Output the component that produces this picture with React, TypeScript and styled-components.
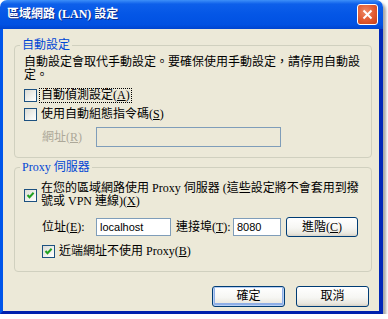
import React from "react";
import styled, { createGlobalStyle } from "styled-components";

const GlobalStyle = createGlobalStyle`
  body {
    margin: 0;
    background: #fff;
  }
`;

const Window = styled.div`
  width: 383px;
  height: 314px;
  display: flex;
  flex-direction: column;
  border-radius: 7px 7px 0 0;
  box-shadow: 3px 3px 3px rgba(0, 0, 0, 0.35);
  font-family: "Liberation Serif", "Noto Sans CJK TC", serif;
  font-size: 12px;
  line-height: 13px;
  color: #000;
`;

const TitleBar = styled.div`
  height: 29px;
  flex-shrink: 0;
  display: flex;
  align-items: center;
  padding: 0 5px 0 7px;
  border-radius: 7px 7px 0 0;
  background: linear-gradient(
    to bottom,
    #3d8ff8 0%,
    #0d5fea 14%,
    #0456e6 50%,
    #0151e2 85%,
    #0044cf 100%
  );
`;

const TitleText = styled.div`
  color: #fff;
  font-weight: bold;
  font-size: 12px;
  text-shadow: 1px 1px 0 #0a2a8a;
`;

const CloseButton = styled.div`
  margin-left: auto;
  width: 19px;
  height: 19px;
  border: 1px solid #fff;
  border-radius: 3px;
  display: flex;
  align-items: center;
  justify-content: center;
  background: radial-gradient(circle at 40% 35%, #ef8a66 0%, #e0582f 55%, #c33e16 100%);
`;

const Client = styled.div`
  flex: 1;
  display: flex;
  flex-direction: column;
  background: #ece9d8;
  border-left: 3px solid #0055ea;
  border-right: 4px solid #0026b8;
  border-bottom: 3px solid #0021ad;
  padding: 10px 7px 0 11px;
`;

const Group = styled.fieldset<{ $gap?: number }>`
  margin: ${(p) => p.$gap ?? 0}px 0 0;
  padding: 0;
  min-width: 0;
  border: 1px solid #d0d0bf;
  border-radius: 4px;
`;

const Legend = styled.legend`
  margin-left: 5px;
  padding: 0 2px;
  color: #0046d5;
  line-height: 13px;
`;

const GroupBody = styled.div<{ $top: number; $bottom: number }>`
  display: flex;
  flex-direction: column;
  padding: ${(p) => p.$top}px 9px ${(p) => p.$bottom}px 9px;
`;

const Desc = styled.p`
  margin: 0;
`;

const CheckRow = styled.div<{ $top: number; $indent?: number }>`
  display: flex;
  align-items: center;
  gap: 3px;
  margin-top: ${(p) => p.$top}px;
  padding-left: ${(p) => p.$indent ?? 0}px;
  min-height: 15px;
`;

const Box = styled.span`
  width: 11px;
  height: 11px;
  flex-shrink: 0;
  border: 1px solid #1c5180;
  background: linear-gradient(135deg, #dcdcd5 0%, #f2f2ee 60%, #ffffff 100%);
  display: flex;
  align-items: center;
  justify-content: center;
`;

const CheckLabel = styled.span<{ $focused?: boolean }>`
  padding: 0 1px;
  border: 1px dotted ${(p) => (p.$focused ? "#000" : "transparent")};
  margin-left: -1px;
`;

const FieldRow = styled.div<{ $top: number }>`
  display: flex;
  align-items: center;
  margin-top: ${(p) => p.$top}px;
  padding-left: 18px;
`;

const FieldLabel = styled.span<{ $width: number; $disabled?: boolean }>`
  width: ${(p) => p.$width}px;
  flex-shrink: 0;
  color: ${(p) => (p.$disabled ? "#aca899" : "#000")};
`;

const TextBox = styled.div<{ $width: number; $height: number; $disabled?: boolean }>`
  width: ${(p) => p.$width}px;
  height: ${(p) => p.$height}px;
  box-sizing: border-box;
  flex-shrink: 0;
  border: 1px solid #7f9db9;
  background: ${(p) => (p.$disabled ? "#ece9d8" : "#fff")};
  padding-left: 3px;
  display: flex;
  align-items: center;
  font-family: "Liberation Sans", sans-serif;
  font-size: 11px;
`;

const Button = styled.div<{ $width: number; $height: number; $default?: boolean; $left?: number }>`
  width: ${(p) => p.$width}px;
  height: ${(p) => p.$height}px;
  box-sizing: border-box;
  margin-left: ${(p) => p.$left ?? 0}px;
  flex-shrink: 0;
  border: 1px solid #003c74;
  border-radius: 3px;
  display: flex;
  align-items: center;
  justify-content: center;
  background: linear-gradient(to bottom, #ffffff 0%, #f6f6f3 55%, #eae8e0 85%, #d8d3c7 100%);
  box-shadow: ${(p) =>
    p.$default ? "inset 0 0 0 1px #b8d0f4, inset 0 -1px 0 2px #8eaee6" : "none"};
`;

const ButtonRow = styled.div`
  display: flex;
  justify-content: flex-end;
  gap: 11px;
  margin-top: 14px;
  padding-right: 3px;
`;

function Check({ checked }: { checked?: boolean }) {
  return (
    <Box>
      {checked && (
        <svg width="9" height="9" viewBox="0 0 9 9">
          <polyline points="1.5,4 3.5,6.2 7.6,1.8" fill="none" stroke="#21a121" strokeWidth="2" />
        </svg>
      )}
    </Box>
  );
}

export default function App() {
  return (
    <>
      <GlobalStyle />
      <Window>
        <TitleBar>
          <TitleText>區域網路 (LAN) 設定</TitleText>
          <CloseButton>
            <svg width="11" height="11" viewBox="0 0 11 11">
              <path d="M1.5 1.5 L9.5 9.5 M9.5 1.5 L1.5 9.5" stroke="#fff" strokeWidth="2" />
            </svg>
          </CloseButton>
        </TitleBar>
        <Client>
          <Group>
            <Legend>自動設定</Legend>
            <GroupBody $top={4} $bottom={10}>
              <Desc>
                自動設定會取代手動設定。要確保使用手動設定，請停用自動設
                <br />
                定。
              </Desc>
              <CheckRow $top={6}>
                <Check />
                <CheckLabel $focused>
                  自動偵測設定(<u>A</u>)
                </CheckLabel>
              </CheckRow>
              <CheckRow $top={4}>
                <Check />
                <CheckLabel>
                  使用自動組態指令碼(<u>S</u>)
                </CheckLabel>
              </CheckRow>
              <FieldRow $top={5}>
                <FieldLabel $width={54} $disabled>
                  網址(<u>R</u>)
                </FieldLabel>
                <TextBox $width={185} $height={20} $disabled />
              </FieldRow>
            </GroupBody>
          </Group>

          <Group $gap={3}>
            <Legend>Proxy 伺服器</Legend>
            <GroupBody $top={7} $bottom={12}>
              <CheckRow $top={0}>
                <Check checked />
                <CheckLabel>
                  在您的區域網路使用 Proxy 伺服器 (這些設定將不會套用到撥
                  <br />
                  號或 VPN 連線)(<u>X</u>)
                </CheckLabel>
              </CheckRow>
              <FieldRow $top={8}>
                <FieldLabel $width={54}>
                  位址(<u>E</u>):
                </FieldLabel>
                <TextBox $width={75} $height={18}>
                  localhost
                </TextBox>
                <FieldLabel $width={57} style={{ marginLeft: 5 }}>
                  連接埠(<u>T</u>):
                </FieldLabel>
                <TextBox $width={48} $height={18}>
                  8080
                </TextBox>
                <Button $width={72} $height={20} $left={5}>
                  進階(<u>C</u>)
                </Button>
              </FieldRow>
              <CheckRow $top={7} $indent={18}>
                <Check checked />
                <CheckLabel>
                  近端網址不使用 Proxy(<u>B</u>)
                </CheckLabel>
              </CheckRow>
            </GroupBody>
          </Group>

          <ButtonRow>
            <Button $width={73} $height={21} $default>
              確定
            </Button>
            <Button $width={73} $height={21}>
              取消
            </Button>
          </ButtonRow>
        </Client>
      </Window>
    </>
  );
}
